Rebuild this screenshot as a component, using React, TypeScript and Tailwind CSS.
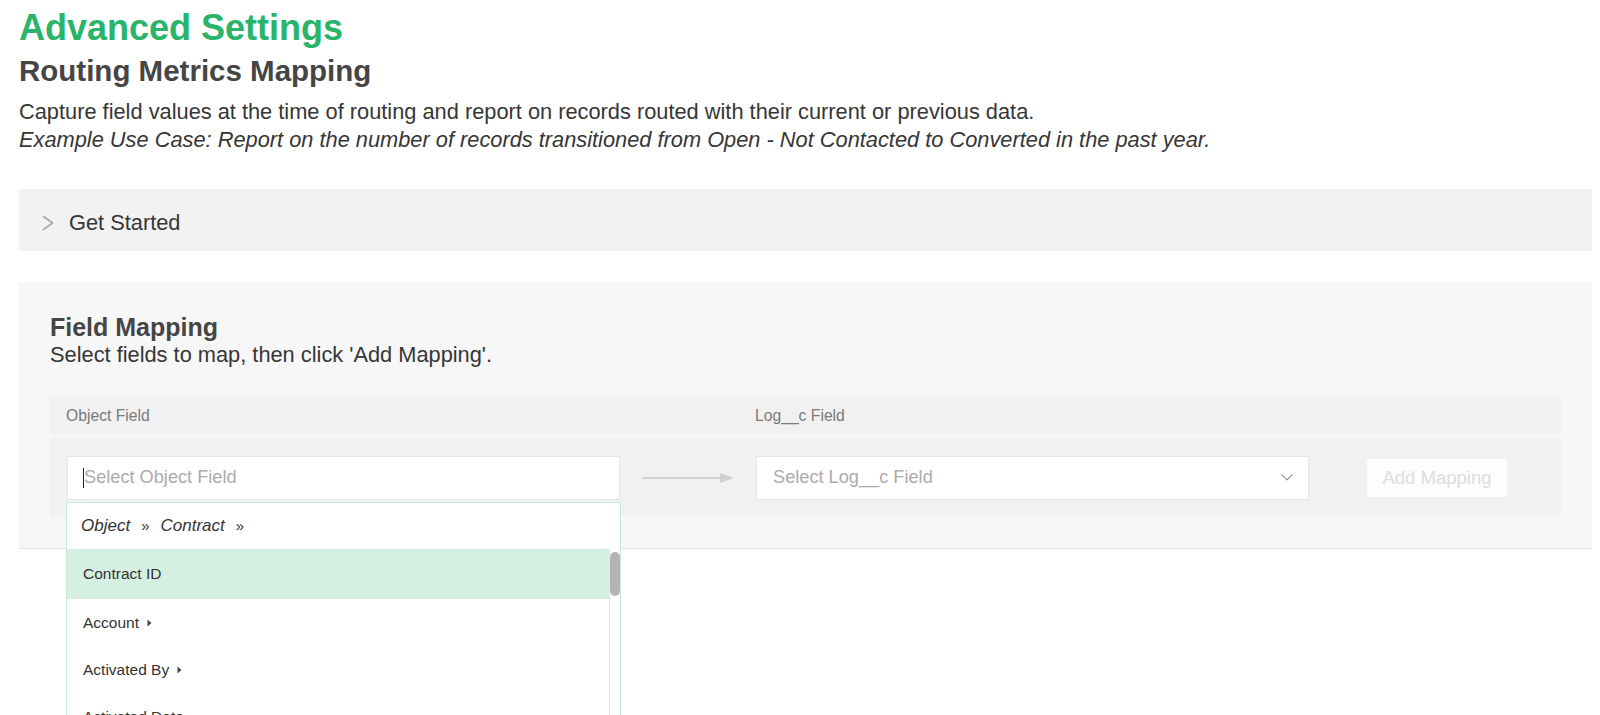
import React from "react";

function ChevronRight() {
  return (
    <svg width="12" height="16" viewBox="0 0 12 16" className="block">
      <polyline points="1.5,1.5 10.5,8 1.5,14.5" fill="none" stroke="#a8a8a8" strokeWidth="1.6" strokeLinecap="round" strokeLinejoin="round" />
    </svg>
  );
}

function ChevronDown() {
  return (
    <svg width="12" height="7" viewBox="0 0 12 7" className="block">
      <polyline points="0.8,0.8 6,5.8 11.2,0.8" fill="none" stroke="#8a8a8a" strokeWidth="1.1" strokeLinecap="round" strokeLinejoin="round" />
    </svg>
  );
}

function MapArrow() {
  return (
    <svg width="92" height="12" viewBox="0 0 92 12" className="block">
      <line x1="0" y1="6" x2="80" y2="6" stroke="#cfcfcf" strokeWidth="1.8" />
      <polygon points="78,1 92,6 78,11" fill="#cfcfcf" />
    </svg>
  );
}

function Caret() {
  return (
    <svg width="5" height="8" viewBox="0 0 5 8" className="ml-[8px] block">
      <polygon points="0.5,0.5 4.5,4 0.5,7.5" fill="#444" />
    </svg>
  );
}

const fields: { label: string; nested?: boolean }[] = [
  { label: "Contract ID" },
  { label: "Account", nested: true },
  { label: "Activated By", nested: true },
  { label: "Activated Date" },
  { label: "Billing City" },
];

export default function App() {
  return (
    <div className="relative h-[715px] overflow-hidden bg-white pl-[19px] pr-[8px] font-['Liberation_Sans',Arial,Helvetica,sans-serif]">
      <h1 className="pt-[8px] text-[36px] leading-[40px] font-bold text-[#29b46a]">Advanced Settings</h1>
      <h2 className="mt-[5px] text-[29.5px] leading-[36px] font-bold text-[#454545]">Routing Metrics Mapping</h2>
      <div className="mt-[9px] text-[21.8px] leading-[28px] text-[#363636]">
        <p>Capture field values at the time of routing and report on records routed with their current or previous data.</p>
        <p className="italic">Example Use Case: Report on the number of records transitioned from Open - Not Contacted to Converted in the past year.</p>
      </div>

      <div className="mt-[35px] flex h-[62px] items-center bg-[#f2f2f2] pt-[5px] pl-[23px]">
        <ChevronRight />
        <span className="ml-[15px] text-[21.8px] leading-[28px] text-[#363636]">Get Started</span>
      </div>

      <section className="relative mt-[31px] h-[267px] border-b border-[#e2e2e2] bg-[#f7f7f7] px-[31px] pt-[30px]">
        <h3 className="text-[25px] leading-[30px] font-bold text-[#454545]">Field Mapping</h3>
        <p className="text-[21.8px] leading-[26px] text-[#363636]">Select fields to map, then click 'Add Mapping'.</p>

        <div className="mt-[29px] flex h-[37px] items-center bg-[#f1f1f1] pl-[16px] text-[15.7px] text-[#7a7a7a]">
          <div className="w-[689px]">Object Field</div>
          <div>Log__c Field</div>
        </div>

        <div className="mt-[4px] flex h-[79px] items-center bg-[#f1f1f1] pl-[17px]">
          <div className="relative flex h-[44px] w-[553px] items-center rounded-[2px] border border-[#e4e4e4] bg-white pl-[16px] text-[18.2px] text-[#ababab]">
            <span className="absolute left-[15px] top-[11px] h-[20px] w-[1px] bg-[#222]" />
            Select Object Field
          </div>
          <div className="mx-[22px]">
            <MapArrow />
          </div>
          <div className="flex h-[44px] w-[553px] items-center justify-between rounded-[2px] border border-[#e4e4e4] bg-white pl-[16px] pr-[15px] text-[18.2px] text-[#ababab]">
            <span>Select Log__c Field</span>
            <ChevronDown />
          </div>
          <button className="ml-[57px] flex h-[40px] w-[142px] items-center justify-center rounded-[3px] border border-[#f2f2f2] bg-[#fdfdfd] text-[18.5px] text-[#dcdcdc]">
            Add Mapping
          </button>
        </div>

        {/* open object-field picker, drawn over the panel */}
        <div className="absolute left-[47px] top-[220px] w-[555px] border border-[#c6ebd8] bg-white">
          <div className="flex h-[46px] items-center pl-[14px] text-[17px] leading-[20px] text-[#333]">
            <span className="italic">Object</span>
            <span className="mx-[11px] text-[15px] text-[#333]">»</span>
            <span className="italic">Contract</span>
            <span className="ml-[11px] text-[15px] text-[#333]">»</span>
          </div>
          <div className="flex h-[260px]">
            <div className="flex-1">
              {fields.map((f, i) => (
                <div
                  key={f.label}
                  className={
                    i === 0
                      ? "flex h-[50px] items-center bg-[#d5efe2] pl-[16px] text-[15.5px] leading-[18px] text-[#333]"
                      : "flex h-[47px] items-center pl-[16px] text-[15.5px] leading-[18px] text-[#333]"
                  }
                >
                  <span>{f.label}</span>
                  {f.nested && <Caret />}
                </div>
              ))}
            </div>
            <div className="relative w-[11px] border-l border-[#e6e6e6] bg-white">
              <div className="absolute left-[0px] top-[3px] h-[44px] w-[10px] rounded-full bg-[#b4b4b4]" />
            </div>
          </div>
        </div>
      </section>
    </div>
  );
}
